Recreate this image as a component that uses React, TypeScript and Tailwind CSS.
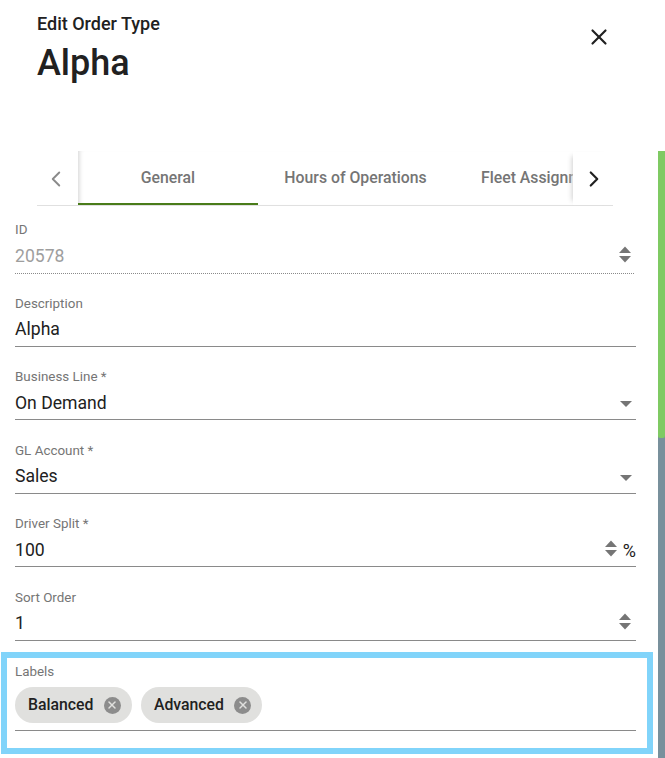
import { ChevronLeft, ChevronRight, X } from "lucide-react";

function Spinner() {
  return (
    <svg width="14" height="17" viewBox="0 0 14 17" className="mb-[4px] fill-[#757575]">
      <path d="M7 0.5 L13 7 H1 Z" />
      <path d="M1 10 H13 L7 16.5 Z" />
    </svg>
  );
}

function Caret() {
  return (
    <svg width="12" height="6" viewBox="0 0 12 6" className="mr-[4px] mt-[2px] fill-[#757575]">
      <path d="M0 0 H12 L6 6 Z" />
    </svg>
  );
}

function Field({ label, value, children }: { label: string; value: string; children?: React.ReactNode }) {
  return (
    <div className="h-[73.5px] pt-[16px]">
      <div className="text-[13.4px] leading-[16px] text-[#757575]">{label}</div>
      <div className="flex h-[35px] items-center justify-between border-b border-[#8a8a8a] pb-[1px] pt-[3px] text-[17.6px] text-[#212121]">
        <span>{value}</span>
        {children}
      </div>
    </div>
  );
}

function Chip({ label }: { label: string }) {
  return (
    <div className="flex h-[36px] items-center gap-[10.5px] rounded-full bg-[#e0e0de] pl-[13px] pr-[11px] text-[15.8px] font-medium text-[#212121]">
      <span>{label}</span>
      <span className="flex h-[17px] w-[17px] items-center justify-center rounded-full bg-[#8c8c8c]">
        <X size={12} strokeWidth={3} className="text-[#e0e0de]" />
      </span>
    </div>
  );
}

export default function App() {
  return (
    <div className="h-[758px] w-[665px] overflow-hidden bg-white font-['Roboto',sans-serif]">
      <header className="flex h-[151px] justify-between pl-[37px] pr-[53px] pt-[12px]">
        <div>
          <div className="text-[18px] leading-[24px] font-medium text-[#212121]">Edit Order Type</div>
          <h1 className="mt-[2px] text-[36px] leading-[50px] font-medium text-[#212121]">Alpha</h1>
        </div>
        <X size={26} strokeWidth={2} className="mt-[12px] text-[#212121]" />
      </header>

      <div className="flex">
        <main className="w-[658px] shrink-0">
          <div className="ml-[37px] flex h-[55px] w-[576px] border-b border-[#e0e0e0] pt-[1px] text-[15.8px] font-medium text-[#757575]">
            <div className="flex w-[41px] items-center justify-center">
              <ChevronLeft size={26} strokeWidth={1.75} className="mr-[3px] text-[#8a8a8a]" />
            </div>
            <div className="-mt-[1px] flex flex-1 overflow-hidden shadow-[inset_5px_0_5px_-4px_#d0d0d0]">
              <div className="flex w-[180px] shrink-0 items-center justify-center border-b-2 border-[#4a7c1a] pt-[2px]">General</div>
              <div className="flex w-[195px] shrink-0 items-center justify-center">Hours of Operations</div>
              <div className="flex shrink-0 items-center whitespace-nowrap pl-[28px]">Fleet Assignments</div>
            </div>
            <div className="flex w-[40px] items-center justify-center pl-[1px] shadow-[-5px_0_5px_-4px_#d0d0d0]">
              <ChevronRight size={26} strokeWidth={2} className="text-[#212121]" />
            </div>
          </div>

          <div className="pl-[15px] pr-[22px]">
            <div className="h-[73.5px] pt-[16px]">
              <div className="text-[13.4px] leading-[16px] text-[#757575]">ID</div>
              <div className="flex h-[36px] w-[619px] items-center justify-between border-b border-dotted border-[#8a8a8a] pb-[2px] pr-[2px] pt-[3px] text-[17.6px] text-[#9e9e9e]">
                <span>20578</span>
                <Spinner />
              </div>
            </div>
            <Field label="Description" value="Alpha" />
            <Field label="Business Line *" value="On Demand"><Caret /></Field>
            <Field label="GL Account *" value="Sales"><Caret /></Field>
            <Field label="Driver Split *" value="100">
              <span className="flex items-center gap-[5px] text-[18px]">
                <Spinner />
                <span>%</span>
              </span>
            </Field>
            <Field label="Sort Order" value="1">
              <span className="flex items-center pr-[4px]"><Spinner /></span>
            </Field>
          </div>

          <div className="ml-[1px] mt-[5px] h-[102px] w-[652px] border-[6px] border-[#81d4fa] pl-[8px] pr-[11px] pt-[6px]">
            <div className="text-[13.4px] leading-[16px] text-[#757575]">Labels</div>
            <div className="flex h-[51px] items-start gap-[9px] border-b border-[#8a8a8a] pt-[7px]">
              <Chip label="Balanced" />
              <Chip label="Advanced" />
            </div>
          </div>
        </main>

        <div className="h-[607px] w-[7px] bg-[#78909c]">
          <div className="h-[287px] rounded-b-[2px] bg-[#7fca63]" />
        </div>
      </div>
    </div>
  );
}
